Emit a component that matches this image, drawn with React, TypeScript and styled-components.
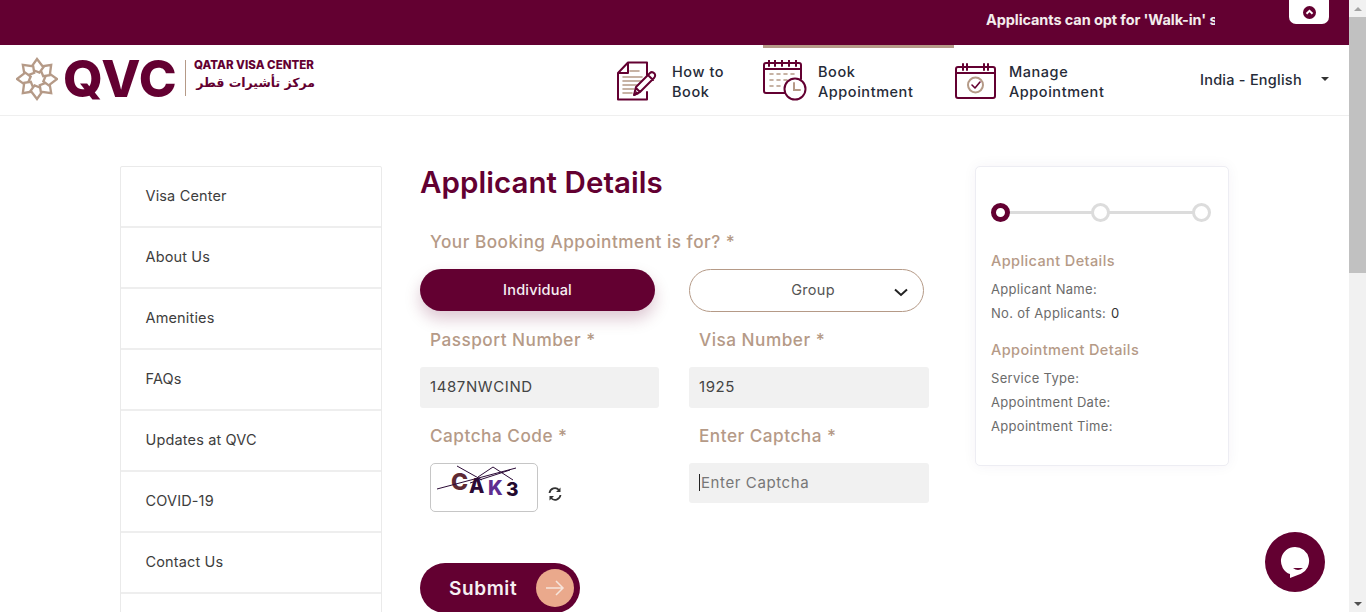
import React from "react";
import styled, { createGlobalStyle } from "styled-components";

const maroon = "#630031";
const tan = "#b59a87";

const Global = createGlobalStyle`
  html, body { margin: 0; padding: 0; height: 612px; overflow: hidden; background: #fff; }
  * { box-sizing: border-box; }
  body { font-family: Inter, "Noto Sans", sans-serif; color: #333; }
`;

const Shell = styled.div`display: flex; width: 1366px; height: 612px; overflow: hidden;`;
const Page = styled.div`position: relative; width: 1349px; height: 612px; overflow: hidden; flex: none;`;

const ScrollTrack = styled.div`
  width: 17px; height: 612px; background: #f1f1f1; display: flex; flex-direction: column; align-items: center; flex: none;
`;
const ScrollArrow = styled.div<{ $down?: boolean }>`
  height: 17px; width: 17px; display: flex; align-items: center; justify-content: center; flex: none;
  &::after {
    content: ""; width: 0; height: 0; border-left: 4px solid transparent; border-right: 4px solid transparent;
    ${p => p.$down ? "border-top: 4px solid #505050;" : "border-bottom: 4px solid #a3a3a3;"}
  }
`;
const ScrollThumb = styled.div`width: 17px; height: 256px; background: #c1c1c1; flex: none;`;
const ScrollGap = styled.div`flex: 1;`;

const TopBar = styled.div`
  height: 45px; background: ${maroon}; display: flex; align-items: flex-start; padding-left: 986px;
`;
const Ticker = styled.div`
  width: 229px; height: 45px; overflow: hidden; white-space: nowrap; color: #f3ecec; font-weight: 700; font-size: 14.5px;
  line-height: 40px; letter-spacing: -0.1px;
`;
const UpTab = styled.div`
  margin-left: 74px; width: 40px; height: 24px; background: #fff; border-radius: 0 0 7px 7px;
  display: flex; align-items: center; justify-content: center;
`;

const Header = styled.header`
  height: 71px; background: #fff; border-bottom: 1px solid #efefef; display: flex; align-items: stretch; padding-left: 16px;
`;
const Logo = styled.div`display: flex; align-items: center; width: 299px; flex: none; color: ${maroon};`;
const LogoMark = styled.div`
  font-size: 51px; font-weight: 800; line-height: 1; letter-spacing: 0.5px; margin: 0 0 3px 5px; width: 122px; flex: none;
`;
const LogoDivider = styled.div`width: 1px; height: 36px; background: ${tan}; margin-right: 8px; flex: none; margin-bottom: 4px;`;
const LogoWords = styled.div`display: flex; flex-direction: column; white-space: nowrap; padding-bottom: 9px;`;
const LogoEn = styled.div`font-size: 11.5px; font-weight: 800; line-height: 14px; letter-spacing: 0.02px;`;
const LogoAr = styled.div`
  font-family: "DejaVu Sans", sans-serif; font-size: 12.5px; font-weight: 700; line-height: 21px; direction: rtl; text-align: right; width: 121px;
`;
const EmblemWrap = styled.div`width: 42px; height: 44px; flex: none; margin-bottom: 2px;`;

const Nav = styled.nav`display: flex; margin-left: 302px; align-items: stretch;`;
const NavItem = styled.a<{ $w: number; $active?: boolean }>`
  width: ${p => p.$w}px; display: flex; align-items: flex-start; padding-top: 14px;
  border-top: 3px solid ${p => p.$active ? tan : "transparent"}; color: #262b38;
`;
const NavIcon = styled.div<{ $w: number; $top: number; $left?: number }>`
  width: ${p => p.$w}px; flex: none; margin-top: ${p => p.$top}px; padding-left: ${p => p.$left ?? 0}px;
`;
const NavText = styled.div`font-size: 14.5px; font-weight: 500; line-height: 20px; letter-spacing: 0.55px;`;
const Lang = styled.div`
  display: flex; align-items: center; font-size: 14.5px; font-weight: 500; color: #262b38; height: 68px; letter-spacing: 0.24px;
  &::after {
    content: ""; margin-left: 19px; margin-top: -1px; border-left: 4px solid transparent; border-right: 4px solid transparent; border-top: 4px solid #333;
  }
`;

const Main = styled.main`display: flex; align-items: flex-start; padding: 50px 0 0 120px;`;
const Sidebar = styled.aside`width: 262px; flex: none; border: 1px solid #eaeaea; border-radius: 2px;`;
const SideItem = styled.div`
  height: 61px; border-bottom: 2px solid #eee; padding: 0 24.5px 2px; display: flex; align-items: center; font-size: 14.5px; color: #3d3d3d; letter-spacing: 0.15px;
`;

const Form = styled.section`width: 510px; margin-left: 38px; flex: none;`;
const Title = styled.h1`
  margin: -1px 0 0; font-size: 29.5px; font-weight: 600; line-height: 34px; color: ${maroon}; letter-spacing: 0.05px;
`;
const Label = styled.label`
  display: block; padding-left: 10px; font-size: 17.2px; font-weight: 500; line-height: 22px; color: ${tan}; white-space: nowrap; letter-spacing: 0.5px;
`;
const Grid = styled.div<{ $top?: number }>`
  display: grid; grid-template-columns: 239px 240px; column-gap: 30px; align-items: start; margin-top: ${p => p.$top ?? 0}px;
`;
const PromptLabel = styled(Label)`margin: 32px 0 16px;`;
const Pill = styled.button`
  width: 235px; height: 42px; border-radius: 21px; border: 0; background: ${maroon}; color: #f6eff2; font: 500 14.5px Inter, sans-serif;
  letter-spacing: 0.2px; padding: 0 0 2px; box-shadow: 0 8px 16px rgba(99, 0, 49, 0.22);
`;
const SelectPill = styled.div`
  position: relative; width: 235px; height: 43px; border-radius: 22px; border: 1px solid ${tan}; background: #fff; color: #555;
  font-size: 14.5px; letter-spacing: 0.3px; display: flex; align-items: center; justify-content: center; padding: 0 0 2px 13px;
`;
const Chevron = styled.svg`position: absolute; right: 15px; top: 18px;`;
const InputBox = styled.div<{ $placeholder?: boolean; $h: number }>`
  height: ${p => p.$h}px; background: #f1f1f1; border-radius: 3px; padding: 0 0 2px 10px; display: flex; align-items: center;
  font-size: 15px; letter-spacing: 0.6px; color: ${p => p.$placeholder ? "#777" : "#444"};
`;
const Caret = styled.span`width: 1px; height: 17px; background: #222; margin-right: 1px;`;
const CaptchaWrap = styled.div`display: flex; align-items: flex-end; padding-left: 10px;`;
const CaptchaBox = styled.div`
  width: 108px; height: 49px; border: 1px solid #c6c6c6; border-radius: 5px; background: #fff; overflow: hidden; flex: none;
`;
const Refresh = styled.svg`margin: 0 0 11px 10px;`;
const Submit = styled.button`
  width: 160px; height: 50px; border: 0; border-radius: 25px; background: ${maroon}; color: #f6eff2; font: 600 19px Inter, sans-serif;
  letter-spacing: 0.6px; display: flex; align-items: center; padding: 0 6px 0 29px; justify-content: space-between; margin-top: 51px;
`;
const SubmitDot = styled.span`
  width: 38px; height: 38px; border-radius: 50%; background: #eaa98c; display: flex; align-items: center; justify-content: center;
`;

const Card = styled.aside`
  width: 254px; height: 300px; margin-left: 45px; flex: none; background: #fff; border: 1px solid #ededf3; border-radius: 5px;
  box-shadow: 0 0 14px rgba(60, 40, 90, 0.05); padding: 36px 16px 0 15px;
`;
const Stepper = styled.div`position: relative; display: flex; justify-content: space-between; width: 220px; height: 20px; margin-left: -0.5px;`;
const StepLine = styled.div`position: absolute; left: 10px; right: 10px; top: 8px; height: 3px; background: #dcdcdc;`;
const Step = styled.span<{ $on?: boolean }>`
  position: relative; width: 19px; height: 19px; border-radius: 50%; background: #fff;
  border: ${p => p.$on ? `5.5px solid ${maroon}` : "3px solid #dcdcdc"};
`;
const CardHead = styled.div<{ $top: number }>`
  margin-top: ${p => p.$top}px; margin-bottom: 8px; font-size: 14.5px; font-weight: 500; line-height: 20px; color: ${tan}; letter-spacing: 0.4px;
`;
const CardLine = styled.div`
  margin-bottom: 4px; font-size: 13px; line-height: 20px; color: #6b6b6b; display: flex; gap: 5px; letter-spacing: 0.3px;
  b { font-weight: 400; color: #333; }
`;

const ChatBtn = styled.div`
  position: absolute; left: 1265px; top: 532px; width: 60px; height: 60px; border-radius: 50%; background: ${maroon};
  display: flex; align-items: center; justify-content: center;
`;

const Emblem = () => (
  <EmblemWrap>
    <svg width="42" height="44" viewBox="-21.5 -22 43 44">
      {[0, 45, 90, 135, 180, 225, 270, 315].map(a => (
        <g key={a} transform={`rotate(${a})`} fill="none" stroke={tan} strokeWidth="2.4">
          <path d="M-5 -13.5 L0 -20.5 L6.5 -12 L2.5 -6.5 L-3.5 -9" />
        </g>
      ))}
    </svg>
  </EmblemWrap>
);

const stroke = { fill: "none", stroke: maroon, strokeWidth: 2, strokeLinecap: "round" as const, strokeLinejoin: "round" as const };
const thin = { fill: "none", stroke: tan, strokeWidth: 1.6, strokeLinecap: "round" as const };
const captchaFont = { fontFamily: "Inter, sans-serif", fontWeight: 800 };

const BookIcon = () => (
  <svg width="40" height="40" viewBox="0 0 40 40">
    <path d="M1 12 L11 1.5 H30 V14 M30 31 V38.5 H1 V12 H11 V1.5" {...stroke} />
    <path d="M13 10 H22 M6 16 H25 M6 20 H24 M6 24 H21 M6 28 H17 M6 32 H15" {...thin} />
    <path d="M17 34 L19 26 L33 12 Q35 10 37.5 12.5 Q39 15 37 17 L23 31 Z M31 14 L36 19 M19 27 L23 31" {...stroke} />
    <path d="M17 35 L19 30 L22 33 Z" fill={maroon} />
  </svg>
);
const CalClockIcon = () => (
  <svg width="44" height="42" viewBox="0 0 44 42">
    <path d="M24 33 H3 Q1 33 1 31 V5 Q1 3 3 3 H36 Q38 3 38 5 V19" {...stroke} />
    <path d="M1 9 H38 M6 0.5 V6 M12 0.5 V6 M19 0.5 V6 M26 0.5 V6 M33 0.5 V6" {...stroke} />
    <path d="M7 14 H10 M14 14 H17 M21 14 H24 M28 14 H31 M7 20 H10 M14 20 H17 M21 20 H24 M7 26 H10 M14 26 H17" {...thin} />
    <circle cx="32" cy="29" r="10.5" fill="#fff" stroke={maroon} strokeWidth="2" />
    <path d="M31 23 V30 H37" {...thin} strokeWidth={2} />
  </svg>
);
const CalCheckIcon = () => (
  <svg width="41" height="38" viewBox="0 0 41 38">
    <path d="M3 4 H38 Q40 4 40 6 V33 Q40 35 38 35 H3 Q1 35 1 33 V6 Q1 4 3 4 Z M1 10 H40 M8 1 V7 M12 1 V7 M29 1 V7 M33 1 V7" {...stroke} />
    <circle cx="20.5" cy="22" r="7.5" {...thin} strokeWidth={2} />
    <path d="M17 22 L20 25 L25 19" {...stroke} strokeWidth={1.6} />
  </svg>
);

const nav = [
  { w: 146, iw: 55, top: -1, left: 0, lines: ["How to", "Book"], icon: <BookIcon /> },
  { w: 191, iw: 55, top: -2, left: 0, lines: ["Book", "Appointment"], icon: <CalClockIcon />, active: true },
  { w: 246, iw: 55, top: 1, left: 1, lines: ["Manage", "Appointment"], icon: <CalCheckIcon /> },
];
const side = ["Visa Center", "About Us", "Amenities", "FAQs", "Updates at QVC", "COVID-19", "Contact Us", ""];

export default function App() {
  return (
    <Shell>
      <Global />
      <Page>
        <TopBar>
          <Ticker>Applicants can opt for 'Walk-in' service at the center</Ticker>
          <UpTab>
            <svg width="13" height="13" viewBox="0 0 13 13">
              <circle cx="6.5" cy="6.5" r="6.5" fill={maroon} />
              <path d="M3.5 7.8 L6.5 4.8 L9.5 7.8" fill="none" stroke="#fff" strokeWidth="2" />
            </svg>
          </UpTab>
        </TopBar>
        <Header>
          <Logo>
            <Emblem />
            <LogoMark>QVC</LogoMark>
            <LogoDivider />
            <LogoWords>
              <LogoEn>QATAR VISA CENTER</LogoEn>
              <LogoAr>مركز تأشيرات قطر</LogoAr>
            </LogoWords>
          </Logo>
          <Nav>
            {nav.map(n => (
              <NavItem key={n.lines[1] + n.lines[0]} $w={n.w} $active={n.active}>
                <NavIcon $w={n.iw} $top={n.top} $left={n.left}>{n.icon}</NavIcon>
                <NavText>{n.lines[0]}<br />{n.lines[1]}</NavText>
              </NavItem>
            ))}
          </Nav>
          <Lang>India - English</Lang>
        </Header>
        <Main>
          <Sidebar>
            {side.map((s, i) => <SideItem key={i}>{s}</SideItem>)}
          </Sidebar>
          <Form>
            <Title>Applicant Details</Title>
            <PromptLabel>Your Booking Appointment is for? *</PromptLabel>
            <Grid>
              <Pill>Individual</Pill>
              <SelectPill>
                Group
                <Chevron width="14" height="9" viewBox="0 0 14 9"><path d="M1 1.5 L7 7 L13 1.5" fill="none" stroke="#222" strokeWidth="2" /></Chevron>
              </SelectPill>
            </Grid>
            <Grid $top={17}>
              <Label>Passport Number *</Label>
              <Label>Visa Number *</Label>
            </Grid>
            <Grid $top={16}>
              <InputBox $h={41}>1487NWCIND</InputBox>
              <InputBox $h={41}>1925</InputBox>
            </Grid>
            <Grid $top={17}>
              <Label>Captcha Code *</Label>
              <Label>Enter Captcha *</Label>
            </Grid>
            <Grid $top={16}>
              <CaptchaWrap>
                <CaptchaBox>
                  <svg width="106" height="47" viewBox="0 0 106 47">
                    <text x="20" y="26" {...captchaFont} fontSize="23" fill="#5e2a34">C</text>
                    <text x="38" y="29" {...captchaFont} fontSize="20" fill="#2b0a36">A</text>
                    <text x="57" y="31" {...captchaFont} fontSize="20" fill="#5e2d91">K</text>
                    <text x="75" y="32" {...captchaFont} fontSize="19" fill="#23092e">3</text>
                    <path d="M6 25 L85 4 M26 2 L51 16 M47 13 L62 3 L82 16 M39 19 L79 6" fill="none" stroke="#2b0a36" strokeWidth="1" />
                  </svg>
                </CaptchaBox>
                <Refresh width="14" height="14" viewBox="0 0 14 14">
                  <path d="M1.5 6 A5.5 5.5 0 0 1 11 3 M12.5 8 A5.5 5.5 0 0 1 3 11" fill="none" stroke="#333" strokeWidth="1.8" />
                  <path d="M12.5 0.5 V5 H8 Z M1.5 13.5 V9 H6 Z" fill="#333" />
                </Refresh>
              </CaptchaWrap>
              <InputBox $placeholder $h={40}><Caret />Enter Captcha</InputBox>
            </Grid>
            <Submit>
              Submit
              <SubmitDot>
                <svg width="20" height="20" viewBox="0 0 20 20"><path d="M1 10 H18 M11 3 L18 10 L11 17" fill="none" stroke="#f6e5dc" strokeWidth="1.5" /></svg>
              </SubmitDot>
            </Submit>
          </Form>
          <Card>
            <Stepper>
              <StepLine />
              <Step $on />
              <Step />
              <Step />
            </Stepper>
            <CardHead $top={28}>Applicant Details</CardHead>
            <CardLine>Applicant Name:</CardLine>
            <CardLine>No. of Applicants: <b>0</b></CardLine>
            <CardHead $top={17}>Appointment Details</CardHead>
            <CardLine>Service Type:</CardLine>
            <CardLine>Appointment Date:</CardLine>
            <CardLine>Appointment Time:</CardLine>
          </Card>
        </Main>
        <ChatBtn>
          <svg width="32" height="34" viewBox="0 0 32 34">
            <path d="M16 2 A14 14 0 0 1 22 28.7 L11 33 L11 29.1 A14 14 0 0 1 16 2 Z" fill="#fff" />
            <path d="M14 23 Q19 27 24 23 Z" fill={maroon} />
          </svg>
        </ChatBtn>
      </Page>
      <ScrollTrack>
        <ScrollArrow />
        <ScrollThumb />
        <ScrollGap />
        <ScrollArrow $down />
      </ScrollTrack>
    </Shell>
  );
}
